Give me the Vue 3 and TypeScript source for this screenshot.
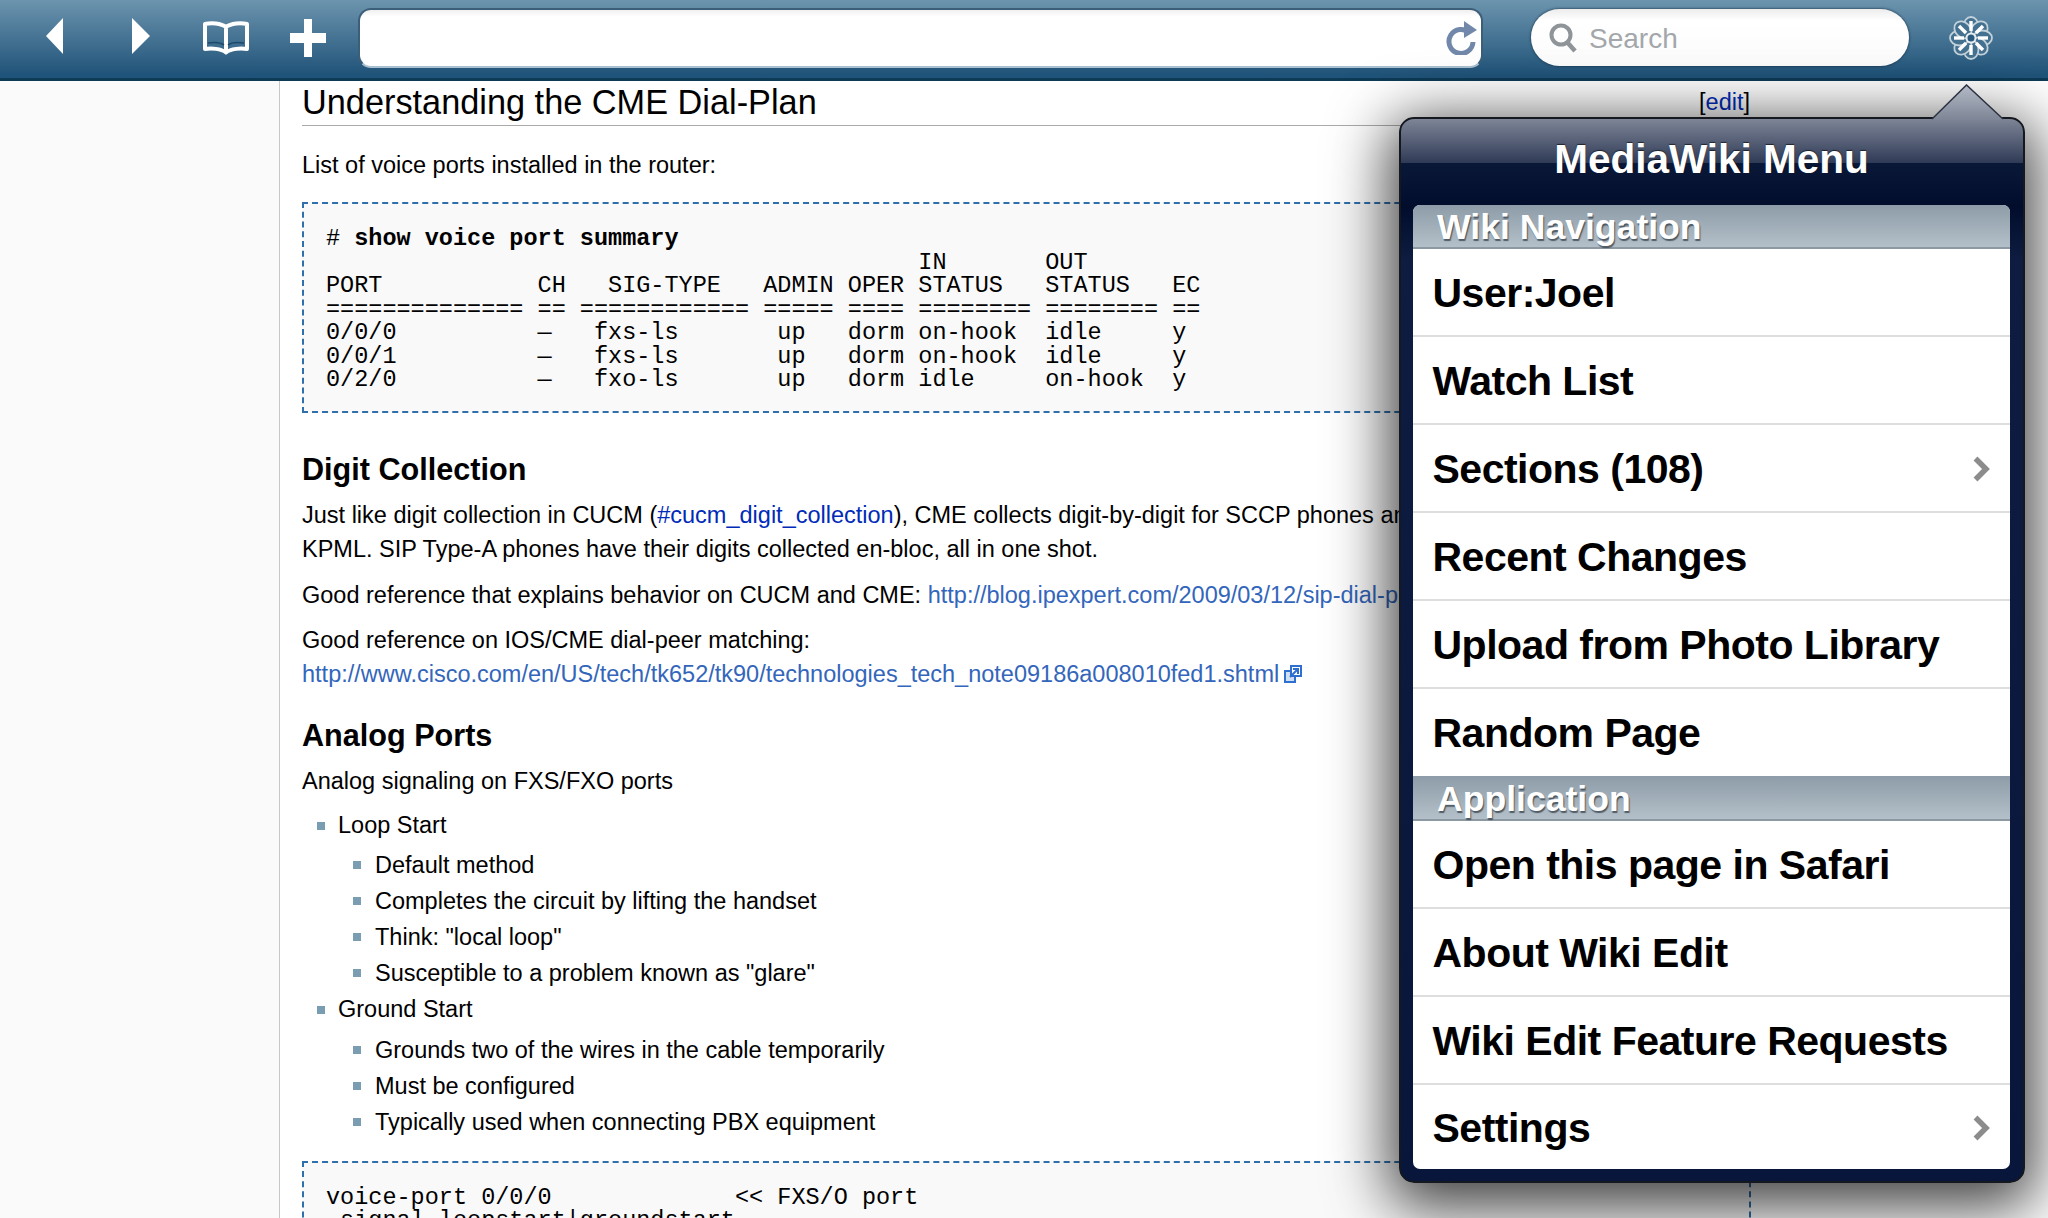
<script setup lang="ts">
interface Row { label: string; more?: boolean }
interface Section { title: string; rows: Row[] }

const sections: Section[] = [
  {
    title: 'Wiki Navigation',
    rows: [
      { label: 'User:Joel' },
      { label: 'Watch List' },
      { label: 'Sections (108)', more: true },
      { label: 'Recent Changes' },
      { label: 'Upload from Photo Library' },
      { label: 'Random Page' },
    ],
  },
  {
    title: 'Application',
    rows: [
      { label: 'Open this page in Safari' },
      { label: 'About Wiki Edit' },
      { label: 'Wiki Edit Feature Requests' },
      { label: 'Settings', more: true },
    ],
  },
]

const petals = [0, 45, 90, 135, 180, 225, 270, 315]

const summaryRest = `                                          IN       OUT
PORT           CH   SIG-TYPE   ADMIN OPER STATUS   STATUS   EC
============== == ============ ===== ==== ======== ======== ==
0/0/0          —   fxs-ls       up   dorm on-hook  idle     y
0/0/1          —   fxs-ls       up   dorm on-hook  idle     y
0/2/0          —   fxo-ls       up   dorm idle     on-hook  y`

const voicePort = `voice-port 0/0/0             << FXS/O port
 signal loopstart|groundstart`
</script>

<template>
  <div class="screen">
    <header class="toolbar">
      <svg class="back" width="17" height="36" viewBox="0 0 17 36"><path d="M17 0V36L0 18Z" fill="#fff" /></svg>
      <svg class="forward" width="18" height="36" viewBox="0 0 18 36"><path d="M0 0V36L18 18Z" fill="#fff" /></svg>
      <svg class="book" width="48" height="34" viewBox="0 0 48 34">
        <path d="M24 6C19 2 9 1.500 3 3V28C9 27 19 27.500 24 31.500C29 27.500 39 27 45 28V3C39 1.500 29 2 24 6ZM24 6V31" fill="none" stroke="#fff" stroke-width="4" stroke-linejoin="round" />
        <path d="M6 22C12 21 19 21.500 22 24M42 22C36 21 29 21.500 26 24" fill="none" stroke="#1c4a6c" stroke-width="1.500" />
      </svg>
      <svg class="plus" width="36" height="38" viewBox="0 0 36 38">
        <path d="M14 0H22V14H36V24H22V38H14V24H0V14H14Z" fill="#fff" />
      </svg>
      <div class="address">
        <svg width="32" height="34" viewBox="0 0 32 34">
          <path d="M23.500 12A12 12 0 1 0 27 21" fill="none" stroke="#7288aa" stroke-width="5" />
          <path d="M18 0L31 9L18 17Z" fill="#7288aa" />
        </svg>
      </div>
      <div class="search">
        <svg width="28" height="30" viewBox="0 0 28 30">
          <circle cx="12" cy="12" r="9.500" fill="none" stroke="#8f9499" stroke-width="4" />
          <path d="M18 19L26 28" stroke="#8f9499" stroke-width="4.500" />
        </svg>
        <span>Search</span>
      </div>
      <svg class="flower" width="44" height="44" viewBox="0 0 44 44">
        <g v-for="a in petals" :key="a" :transform="`rotate(${a} 22 22)`">
          <ellipse cx="22" cy="10.500" rx="7.500" ry="9.500" fill="#44718f" stroke="#c3d1da" stroke-width="1.800" />
        </g>
        <g v-for="a in petals" :key="'i' + a" :transform="`rotate(${a} 22 22)`">
          <path d="M22 5V15" stroke="#fff" stroke-width="3.400" />
        </g>
        <circle cx="22" cy="22" r="4.500" fill="#2a5a7e" stroke="#e6edf1" stroke-width="2" />
      </svg>
    </header>

    <div class="page">
      <aside class="sidebar"></aside>
      <main class="article">
        <h2><span class="headline">Understanding the CME Dial-Plan</span><span class="edit">[<a>edit</a>]</span></h2>
        <p class="intro">List of voice ports installed in the router:</p>
        <pre class="code first"># <b>show voice port summary</b>
{{ summaryRest }}</pre>

        <h3 class="digit">Digit Collection</h3>
        <p class="para">Just like digit collection in CUCM (<a class="int">#cucm_digit_collection</a>), CME collects digit-by-digit for SCCP phones and<br />KPML. SIP Type-A phones have their digits collected en-bloc, all in one shot.</p>
        <p class="para">Good reference that explains behavior on CUCM and CME: <a class="ext">http://blog.ipexpert.com/2009/03/12/sip-dial-plan</a></p>
        <p class="para">Good reference on IOS/CME dial-peer matching:<br /><a class="ext">http://www.cisco.com/en/US/tech/tk652/tk90/technologies_tech_note09186a008010fed1.shtml</a><svg class="exticon" width="18" height="18" viewBox="0 0 18 18">
            <path d="M1 6H11V17H1Z" fill="#cfe0f5" stroke="#2f6fd0" stroke-width="2" />
            <path d="M7 1H17V11H7Z" fill="#fff" stroke="#2f6fd0" stroke-width="2" />
            <path d="M14 4L6 12M9 4H14V9" fill="none" stroke="#2f6fd0" stroke-width="2" />
          </svg></p>

        <h3 class="analog">Analog Ports</h3>
        <p class="para analog-intro">Analog signaling on FXS/FXO ports</p>
        <ul class="outer">
          <li>Loop Start
            <ul class="inner">
              <li>Default method</li>
              <li>Completes the circuit by lifting the handset</li>
              <li>Think: "local loop"</li>
              <li>Susceptible to a problem known as "glare"</li>
            </ul>
          </li>
          <li>Ground Start
            <ul class="inner">
              <li>Grounds two of the wires in the cable temporarily</li>
              <li>Must be configured</li>
              <li>Typically used when connecting PBX equipment</li>
            </ul>
          </li>
        </ul>
        <pre class="code second">{{ voicePort }}</pre>
      </main>
    </div>

    <section class="popover">
      <svg class="tip" width="72" height="36" viewBox="0 0 72 36">
        <defs>
          <linearGradient id="tipfill" x1="0" y1="0" x2="0" y2="1">
            <stop offset="0" stop-color="#b4bac6" />
            <stop offset="1" stop-color="#7d8596" />
          </linearGradient>
        </defs>
        <path d="M0 35L34.500 1L71 35V36H0Z" fill="url(#tipfill)" />
        <path d="M0 35L34.500 1L71 35" fill="none" stroke="#2b3140" stroke-width="1.500" />
      </svg>
      <h1>MediaWiki Menu</h1>
      <div class="list">
        <template v-for="s in sections" :key="s.title">
          <div class="section">{{ s.title }}</div>
          <div v-for="r in s.rows" :key="r.label" class="row">
            <span>{{ r.label }}</span>
            <svg v-if="r.more" width="19" height="26" viewBox="0 0 19 26">
              <path d="M3.500 2.500L14 13L3.500 23.500" fill="none" stroke="#8c8c8c" stroke-width="5.500" />
            </svg>
          </div>
        </template>
      </div>
    </section>
  </div>
</template>

<style scoped>
.screen {
  position: relative;
  width: 2048px;
  height: 1218px;
  overflow: hidden;
  background: #fff;
  font-family: "Liberation Sans", Arial, sans-serif;
  color: #000;
}

/* Toolbar */
.toolbar {
  box-sizing: border-box;
  height: 81px;
  padding: 0 0 3px 46px;
  display: flex;
  align-items: center;
  background: linear-gradient(#6c94ae, #205379 96%);
  border-bottom: 3px solid #0d3a55;
}
.back { margin: 0 69px 3px 0; flex: none; }
.forward { margin: 0 52px 3px 0; flex: none; }
.book { margin-right: 40px; flex: none; }
.plus { margin-right: 32px; flex: none; }
.address {
  box-sizing: border-box;
  width: 1125px;
  height: 60px;
  flex: none;
  margin-right: 48px;
  padding-right: 3px;
  display: flex;
  align-items: center;
  justify-content: flex-end;
  background: linear-gradient(#f0f0f0, #fff 12%);
  border: 2px solid #3b5e79;
  border-bottom-color: #a9c0d0;
  border-radius: 13px;
}
.search {
  box-sizing: border-box;
  width: 378px;
  height: 57px;
  flex: none;
  margin-right: 40px;
  padding-left: 18px;
  display: flex;
  align-items: center;
  gap: 12px;
  background: linear-gradient(#ececec, #fff 20%, #fbfbfb);
  border-radius: 29px;
  box-shadow: 0 0 2px 1px rgba(30, 50, 70, .55);
  color: #a3a7ab;
  font-size: 28px;
}
.search span { margin-top: 2px; }
.flower { flex: none; }

/* Article */
.page {
  display: flex;
  height: 1137px;
}
.sidebar {
  width: 279px;
  flex: none;
  background: #fafafa;
  border-right: 1px solid #c8c8c8;
}
.article {
  box-sizing: border-box;
  width: 1471px;
  padding: 0 0 0 22px;
  font-size: 23.500px;
  line-height: 34px;
}
h2 {
  display: flex;
  justify-content: space-between;
  align-items: center;
  margin: 0;
  height: 44px;
  padding-right: 1px;
  font-size: 34.300px;
  font-weight: 400;
  line-height: 44px;
  border-bottom: 1px solid #aaa;
}
.headline { margin-top: -2px; }
.edit {
  font-size: 23.500px;
  line-height: 34px;
  margin-top: -2px;
}
.edit a { color: #002bb8; }
p { margin: 0; }
.intro { margin-top: 22px; }
.code {
  margin: 0;
  font-family: "Liberation Mono", "Courier New", monospace;
  font-size: 23.500px;
  line-height: 23.500px;
  background: #f9f9f9;
  border: 2px dashed #2f6fab;
}
.first {
  margin-top: 20px;
  height: 211px;
  box-sizing: border-box;
  padding: 23px 22px 0;
}
.second {
  margin-top: 22px;
  padding: 23px 22px;
}
h3 {
  margin: 0;
  font-size: 30.600px;
  line-height: 40px;
  font-weight: 700;
}
.digit { margin-top: 35.500px; margin-bottom: 9.500px; }
.analog { margin-top: 23.500px; margin-bottom: 9px; }
.para { margin-bottom: 11.500px; }
.analog-intro { margin-bottom: 10px; }
.int { color: #002bb8; }
.ext { color: #3366bb; }
.exticon { margin-left: 5px; vertical-align: -1px; }

ul { list-style: none; margin: 0; padding: 0; }
li { position: relative; }
li::before {
  content: "";
  position: absolute;
  width: 8px;
  height: 8px;
  background: #7b9db1;
}
.outer { margin-top: 10px; }
.outer > li { padding-left: 36px; }
.outer > li::before { left: 15px; top: 14px; }
.inner { padding-top: 6.500px; }
.inner > li { padding-left: 37px; margin-bottom: 2px; }
.inner > li::before { left: 15px; top: 13px; }

/* Popover */
.popover {
  position: absolute;
  box-sizing: border-box;
  left: 1399px;
  top: 117px;
  width: 626px;
  height: 1066px;
  padding: 0 13px 14px 12px;
  background-image:
    linear-gradient(#7d8596 0, #2f3a56 44px, #0a1838 44px, #020d2c 88px, #0d1c40 140px, #07163a 100%);
  border: 2px solid #15181f;
  border-radius: 15px;
  box-shadow: 0 14px 60px 10px rgba(0, 0, 0, .75);
}
.tip {
  position: absolute;
  right: 19px;
  top: -35px;
}
h1 {
  margin: 0;
  height: 86px;
  text-align: center;
  color: #fff;
  font-size: 40.500px;
  font-weight: 700;
  line-height: 80px;
  text-shadow: 0 -1px 1px rgba(0, 0, 0, .6);
}
.list {
  background: #fff;
  border-radius: 7px;
  overflow: hidden;
}
.section {
  box-sizing: border-box;
  height: 44px;
  padding-left: 24px;
  background: linear-gradient(#8d9ca8, #b4c0c9);
  border-bottom: 2px solid #8d99a2;
  color: #fff;
  font-size: 35.600px;
  font-weight: 700;
  line-height: 44px;
  text-shadow: 1px 2px 1px rgba(50, 60, 70, .75);
}
.row + .section { height: 45px; line-height: 46px; }
.row {
  box-sizing: border-box;
  height: 88px;
  padding: 2px 19px 0 19.500px;
  display: flex;
  align-items: center;
  justify-content: space-between;
  border-bottom: 2px solid #dedede;
  font-size: 41px;
  letter-spacing: -0.500px;
  font-weight: 700;
}
.row:last-child { border-bottom: none; height: 84px; }
.row:nth-of-type(7) { border-bottom: none; height: 87px; }
</style>

<style>
html, body { margin: 0; overflow: hidden; }
</style>
